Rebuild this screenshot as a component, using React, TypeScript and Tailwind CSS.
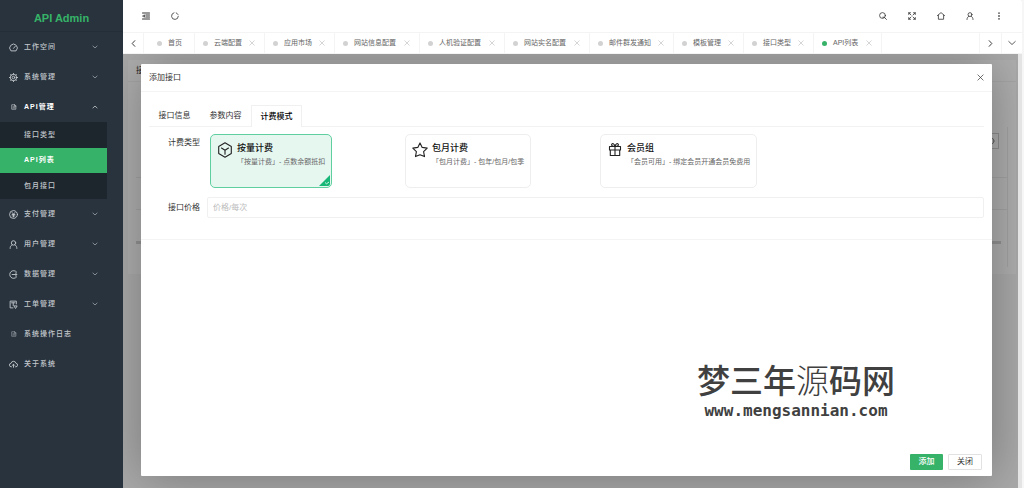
import { useState } from "react"
import type { ReactNode } from "react"
import clsx from "clsx"

type IconProps = { className?: string; children: ReactNode }

// 16x16 line icon
function Icon({ className, children }: IconProps) {
  return (
    <svg
      viewBox="0 0 16 16"
      className={clsx("shrink-0", className)}
      fill="none"
      stroke="currentColor"
      strokeWidth="1.6"
      strokeLinecap="round"
      strokeLinejoin="round"
      aria-hidden="true"
    >
      {children}
    </svg>
  )
}

const down = <path d="M2.5 5.5 8 10.5l5.500-5" />
const up = <path d="M2.500 10.500 8 5.500l5.500 5" />
const cross = <path d="M2 2l12 12M14 2l-12 12" />
const user = (
  <>
    <circle cx="8" cy="5.200" r="3.900" />
    <path d="M2 15c0-3 1-5.200 3.600-6.300M14 15c0-3-1-5.200-3.600-6.300" />
  </>
)
const doc = (
  <>
    <path d="M3 2h7l3 3v9H3zM5.500 7.500h5M5.500 10.500h5" />
    <path d="M9.500 2v3.500H13" />
  </>
)

type MenuItem = { label: string; icon: ReactNode; children?: string[]; small?: boolean; leaf?: boolean }

const menu: MenuItem[] = [
  {
    label: "工作空间",
    icon: (
      <>
        <path d="M3 13.500a6.800 6.800 0 1 1 10 0z" />
        <path d="M8 9.500l3-3.500" />
      </>
    ),
  },
  {
    label: "系统管理",
    icon: (
      <>
        <circle cx="8" cy="8" r="5.800" />
        <circle cx="8" cy="8" r="2.300" />
        <path d="M8 .8v1.400M8 13.800v1.400M.8 8h1.400M13.800 8h1.400M2.900 2.900l1 1M12.100 12.100l1 1M2.900 13.100l1-1M12.100 3.900l1-1" />
      </>
    ),
  },
  { label: "API管理", icon: doc, children: ["接口类型", "API列表", "包月接口"], small: true },
  {
    label: "支付管理",
    icon: (
      <>
        <circle cx="8" cy="8" r="7" />
        <path d="M5.500 4.500 8 7.500l2.500-3M5.500 8h5M5.500 10.500h5M8 7.500v5" />
      </>
    ),
  },
  { label: "用户管理", icon: user },
  {
    label: "数据管理",
    icon: (
      <>
        <path d="M13.500 3.500A6.900 6.900 0 1 0 13.500 12.500" />
        <path d="M5.500 8H14M11.500 5.500H13M11.500 10.500H13" />
      </>
    ),
  },
  {
    label: "工单管理",
    icon: (
      <>
        <path d="M7 14H2V2h11v5M4.500 5h6M7.500 5v5" />
        <path d="M9.500 10.500h5l-2.500 4z" />
      </>
    ),
  },
  { label: "系统操作日志", icon: doc, small: true, leaf: true },
  {
    label: "关于系统",
    icon: (
      <>
        <path d="M4.500 12H4a3 3 0 0 1-.5-6 4.600 4.600 0 0 1 9 0 3 3 0 0 1-.5 6h-.5" />
        <path d="M8 13V8M6 9.500l2-2 2 2" />
      </>
    ),
    leaf: true,
  },
]

const tabs = [
  { label: "首页", width: "w-[51px] pl-[13px]" },
  { label: "云端配置", width: "w-[70px] pl-2" },
  { label: "应用市场", width: "w-[70px] pl-2" },
  { label: "网站信息配置", width: "w-[85px] pl-2" },
  { label: "人机验证配置", width: "w-[85px] pl-2" },
  { label: "网站实名配置", width: "w-[85px] pl-2" },
  { label: "邮件群发通知", width: "w-[84px] pl-2" },
  { label: "模板管理", width: "w-[70px] pl-2" },
  { label: "接口类型", width: "w-[70px] pl-2" },
  { label: "API列表", width: "w-[68px] pl-2" },
]

const plans = [
  {
    id: "usage",
    title: "按量计费",
    desc: "「按量计费」- 点数余额抵扣",
    icon: <path d="M8 .8l6.300 3.600v7.200L8 15.200l-6.300-3.600V4.400zM4.500 6 8 8.200 11.500 6M8 8.200v4" />,
  },
  {
    id: "month",
    title: "包月计费",
    desc: "「包月计费」- 包年/包月/包季",
    icon: <path d="M8 .9l2.200 4.500 5 .7-3.600 3.500.9 5L8 12.700l-4.500 1.900.9-5L.8 6.100l5-.7z" />,
  },
  {
    id: "member",
    title: "会员组",
    desc: "「会员可用」- 绑定会员开通会员免费用",
    icon: (
      <path d="M2.500 4.500h11V8h-11zM3.300 8v5.500h9.400V8M8 4.500v9M8 4.500C6 4.500 4.300 3.700 4.600 2.400 5 1 7.500 1.500 8 4.500zM8 4.500c2 0 3.700-.8 3.400-2.100C11 1 8.500 1.500 8 4.500z" />
    ),
  },
]

function Sidebar() {
  return (
    <aside className="w-[123px] shrink-0 bg-[#28333e] text-[#c4c8cc]">
      <h1 className="flex h-8 items-center justify-center border-b border-[#242e38] pt-1.5 text-[11px] font-bold text-[#36b368]">
        API Admin
      </h1>
      <nav className="text-[7px] font-medium tracking-[1px]">
        {menu.map((item) => (
          <div key={item.label}>
            <a
              href="#"
              className={clsx("flex h-[30px] items-center pl-[9px]", item.children && "font-bold text-white")}
            >
              <span className="flex w-[15px] items-center">
                <Icon className={item.small ? "mx-[2px] size-[6px] opacity-80" : "size-[9px]"}>{item.icon}</Icon>
              </span>
              <span className="flex-1">{item.label}</span>
              {!item.leaf && <Icon className="mr-[25px] size-[6px]">{item.children ? up : down}</Icon>}
            </a>
            {item.children && (
              <div className="mr-4 grid h-[77px] grid-rows-3 bg-[#1d262d]">
                {item.children.map((child) => (
                  <a
                    key={child}
                    href="#"
                    className={clsx(
                      "flex items-center pl-6",
                      child === "API列表" && "bg-[#36b368] font-bold text-white"
                    )}
                  >
                    {child}
                  </a>
                ))}
              </div>
            )}
          </div>
        ))}
      </nav>
    </aside>
  )
}

function ToolButton({ label, children }: { label: string; children: ReactNode }) {
  return (
    <button type="button" aria-label={label} className="flex h-full w-[29px] items-center justify-center">
      <Icon className="size-[8px]">{children}</Icon>
    </button>
  )
}

function TopBar() {
  return (
    <header className="flex h-8 items-center justify-between pr-[9px] pl-2 text-[#333]">
      <div className="flex h-full">
        <ToolButton label="收起菜单">
          <path d="M1 2h14M7.500 6h7.500M7.500 10h7.500M1 14h14M1.500 8h3M4.500 6v4" strokeWidth="2.200" />
        </ToolButton>
        <ToolButton label="刷新">
          <path d="M6 1.500A6.800 6.800 0 1 0 14.700 8.500M10.500 1.800A6.500 6.500 0 0 1 14 5" />
        </ToolButton>
      </div>
      <div className="flex h-full">
        <ToolButton label="搜索">
          <circle cx="7" cy="7" r="5.800" />
          <path d="M11.200 11.200 15 15M7.500 10.500h3" />
        </ToolButton>
        <ToolButton label="全屏">
          <path d="M1.500 5V1.500H5M1.500 1.500 6 6M11 1.500h3.500V5M14.500 1.500 10 6M1.500 11v3.500H5M1.500 14.500 6 10M14.500 11v3.500H11M14.500 14.500 10 10" />
        </ToolButton>
        <ToolButton label="主页">
          <path d="M.8 7.200 8 1.200l7.200 6M2.800 6.500v8h10.400v-8" />
        </ToolButton>
        <ToolButton label="用户">{user}</ToolButton>
        <ToolButton label="更多">
          <path d="M8 2v.6M8 7.700v.6M8 13.400v.6" strokeWidth="3" />
        </ToolButton>
      </div>
    </header>
  )
}

function TabBar() {
  return (
    <div className="flex h-[22px] border-y border-[#f4f4f4] text-[7px] text-[#666]">
      <button type="button" aria-label="向左" className="flex w-[21px] shrink-0 items-center justify-center border-r border-[#f4f4f4] text-[#222]">
        <Icon className="size-[7px]">
          <path d="M11 1.500 5 8l6 6.500" strokeWidth="2" />
        </Icon>
      </button>
      <div className="flex min-w-0 flex-1 overflow-hidden">
        {tabs.map((tab, i) => (
          <a
            key={tab.label}
            href="#"
            className={clsx("flex shrink-0 items-center border-r border-[#f4f4f4] whitespace-nowrap", tab.width)}
          >
            <span
              className={clsx(
                "mr-1.5 size-[5px] rounded-full",
                i === tabs.length - 1 ? "bg-[#36b368]" : "bg-[#d2d2d2]"
              )}
            />
            {tab.label}
            {i > 0 && <Icon className="mr-[9px] ml-auto size-[6px] text-[#bbb]">{cross}</Icon>}
          </a>
        ))}
      </div>
      <button type="button" aria-label="向右" className="flex w-[22px] shrink-0 items-center justify-center border-l border-[#f4f4f4] text-[#222]">
        <Icon className="size-[7px]">
          <path d="M5 1.500 11 8l-6 6.500" strokeWidth="2" />
        </Icon>
      </button>
      <button type="button" aria-label="标签操作" className="flex w-[21px] shrink-0 items-center justify-center border-l border-[#f4f4f4] text-[#333]">
        <Icon className="size-[8px]">
          <path d="M1.500 5 8 11l6.500-6" />
        </Icon>
      </button>
    </div>
  )
}

// list page that sits under the dialog
function ListPage() {
  return (
    <div className="p-[5px] pt-[6px] pr-[2px]">
      <section className="h-[214px] rounded-[1px] bg-[#f9f9f9] pb-1.5 text-[8px] text-[#333]">
        <h2 className="flex h-[22px] items-center border-b border-[#eee] px-2">接口列表</h2>
        <div className="mt-[45px] mr-2 ml-2 border-r border-[#e9e9e9]">
          <div className="flex h-[51px] items-start justify-end border-b border-[#e9e9e9] pt-1.5 pr-2">
            <span className="flex h-4 w-4 items-center justify-center border border-[#ccc] text-[#777]">
              <Icon className="size-[8px]">
                <circle cx="8" cy="8" r="6" />
              </Icon>
            </span>
          </div>
          <div className="h-8 border-b border-[#e9e9e9]" />
          <div className="flex h-[57px] items-start pt-[31px] pr-1.5">
            <div className="h-[3px] flex-1 bg-[#d2d2d2]" />
          </div>
        </div>
      </section>
    </div>
  )
}

function PlanCards() {
  const [plan, setPlan] = useState("usage")

  return (
    <div className="grid flex-1 grid-cols-4 gap-1.5" role="radiogroup" aria-label="计费类型">
      {plans.map((p) => {
        const checked = plan === p.id
        return (
          <label
            key={p.id}
            className={clsx(
              "relative flex h-[54px] w-max items-start rounded-[5px] border px-1.5 pt-[7px]",
              checked ? "border-[#5fcfa0] bg-[#e6f7f0]" : "border-[#eee] bg-white"
            )}
          >
            <input
              type="radio"
              name="plan"
              value={p.id}
              checked={checked}
              onChange={() => setPlan(p.id)}
              className="sr-only"
            />
            <Icon className="mr-1 size-4 text-[#222]">
              <g strokeWidth="1.1">{p.icon}</g>
            </Icon>
            <span className="flex flex-col">
              <span className="text-[9px] leading-[13px] font-medium text-[#111]">{p.title}</span>
              <span className="text-[7px] leading-[13px] text-[#666]">{p.desc}</span>
            </span>
            {checked && (
              <svg viewBox="0 0 11 11" className="absolute right-px bottom-px size-[11px]" aria-hidden="true">
                <path d="M11 0v9a2 2 0 0 1-2 2H0z" fill="#16b777" />
                <path d="M6 7.500l1.500 1.300L10 7" fill="none" stroke="#fff" strokeWidth=".8" />
              </svg>
            )}
          </label>
        )
      })}
    </div>
  )
}

function ApiDialog() {
  return (
    <div
      role="dialog"
      aria-labelledby="dialog-title"
      className="absolute top-[10px] right-[26px] bottom-3 left-[18px] flex flex-col rounded-[1px] bg-white text-[8px] text-[#333] shadow-[1px_1px_50px_rgba(0,0,0,0.3)]"
    >
      <div className="flex h-7 shrink-0 items-center justify-between border-b border-[#f4f4f4] px-2">
        <h2 id="dialog-title">添加接口</h2>
        <button type="button" aria-label="关闭窗口">
          <Icon className="size-[7px]">{cross}</Icon>
        </button>
      </div>

      <form className="flex flex-1 flex-col" onSubmit={(e) => e.preventDefault()}>
        <div className="border-b border-[#f4f4f4] px-2 pt-[13px] pb-[21px]">
          <div role="tablist" className="flex h-[22px] border-b border-[#f2f2f2]">
            <button type="button" role="tab" className="w-[51px]">接口信息</button>
            <button type="button" role="tab" className="w-[51px]">参数内容</button>
            <button
              type="button"
              role="tab"
              aria-selected="true"
              className="-mb-px w-[51px] rounded-t-[1px] border border-b-0 border-[#f0f0f0] bg-white font-medium text-black"
            >
              计费模式
            </button>
          </div>

          <div className="mt-[7px] flex">
            <span className="mr-2.5 w-[51px] pt-[3px] text-right leading-3">计费类型</span>
            <PlanCards />
          </div>

          <div className="mt-[9px] flex items-center">
            <label htmlFor="price" className="mr-[7px] w-[51px] text-right">接口价格</label>
            <input
              id="price"
              type="text"
              placeholder="价格/每次"
              className="h-[21px] min-w-0 flex-1 rounded-[2px] border border-[#f0f0f0] px-[5px] outline-none placeholder:text-[#bbb]"
            />
          </div>
        </div>

        <div className="mt-auto flex justify-end gap-[5px] pr-2.5 pb-1.5">
          <button type="submit" className="h-4 w-[33px] rounded-[1px] bg-[#36b368] font-medium text-white">
            添加
          </button>
          <button type="button" className="h-4 w-[34px] rounded-[1px] border border-[#e2e2e2] bg-white">
            关闭
          </button>
        </div>
      </form>

      <div className="pointer-events-none absolute right-[97px] bottom-[56px] flex flex-col items-center whitespace-nowrap text-[#404040]">
        <span className="text-[33px] leading-[40px] font-medium">
          梦三年<span className="font-light">源</span>码网
        </span>
        <span className="font-['DejaVu_Sans_Mono',monospace] text-[16px] leading-[18px] font-bold">www.mengsannian.com</span>
      </div>
    </div>
  )
}

export default function App() {
  return (
    <div
      lang="zh-CN"
      className="flex min-h-screen bg-[#f6f6f6] font-['Liberation_Sans','Noto_Sans_CJK_SC',sans-serif] leading-normal"
    >
      <Sidebar />
      <div className="mr-[2px] flex min-w-0 flex-1 flex-col">
        <div className="rounded-tr-[3px] bg-white">
          <TopBar />
          <TabBar />
        </div>
        <div className="flex flex-1">
          <main className="relative min-w-0 flex-1 bg-[#f2f2f2]">
            <ListPage />
            <div className="absolute inset-0 overflow-hidden bg-black/30">
              <ApiDialog />
            </div>
          </main>
          <div className="w-1 bg-[#e4e4e4]" />
        </div>
      </div>
    </div>
  )
}
